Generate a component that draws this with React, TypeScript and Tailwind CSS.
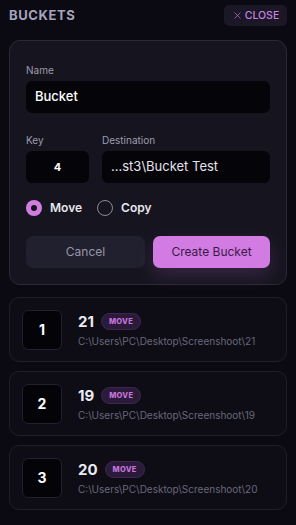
import { X } from "lucide-react";

type Bucket = {
  key: number;
  name: string;
  path: string;
};

const buckets: Bucket[] = [
  { key: 1, name: "21", path: "C:\\Users\\PC\\Desktop\\Screenshoot\\21" },
  { key: 2, name: "19", path: "C:\\Users\\PC\\Desktop\\Screenshoot\\19" },
  { key: 3, name: "20", path: "C:\\Users\\PC\\Desktop\\Screenshoot\\20" },
];

function BucketRow({ bucket }: { bucket: Bucket }) {
  return (
    <div className="flex h-[65px] items-center rounded-[10px] border border-[#1f1e2b] bg-[#0e0d16] pl-[12px]">
      <div className="flex h-[40px] w-[40px] items-center justify-center rounded-[6px] border border-[#221f2e] bg-[#040308] text-[14px] font-bold text-white">
        {bucket.key}
      </div>
      <div className="ml-[16px] flex flex-col">
        <div className="flex items-center gap-[7px]">
          <span className="text-[15px] font-bold leading-[18px] text-[#ecebf2]">
            {bucket.name}
          </span>
          <span className="rounded-full border border-[#3f2652] bg-[#2b1b3a] px-[7px] py-[3px] text-[7.5px] font-extrabold leading-[9px] tracking-[0.3px] text-[#c673dd]">
            MOVE
          </span>
        </div>
        <span className="mt-[4px] text-[10px] leading-[12px] text-[#696779]">
          {bucket.path}
        </span>
      </div>
    </div>
  );
}

export default function App() {
  return (
    <div className="min-h-[525px] w-[296px] bg-[#0b0a12] px-[9px] pt-[5px] font-['Inter',sans-serif]">
      <div className="flex h-[21px] items-center justify-between">
        <span className="text-[13px] font-bold tracking-[0.6px] text-[#a6a3bd]">
          BUCKETS
        </span>
        <button
          type="button"
          className="flex h-[21px] w-[63px] items-center justify-center gap-[2px] rounded-[5px] bg-[#1b1727] text-[10.5px] font-medium text-[#c683de]"
        >
          <X size={11} strokeWidth={1.4} />
          CLOSE
        </button>
      </div>

      <div className="mt-[14px] rounded-[11px] border border-[#2a2939] bg-[#16151f] px-[16px] pb-[16px] pt-[23px]">
        <label className="block text-[10px] leading-[12px] text-[#9d9bab]">Name</label>
        <div className="mt-[5px] flex h-[32px] items-center rounded-[6px] bg-[#050409] px-[9px] text-[13px] font-medium text-white">
          Bucket
        </div>

        <div className="mt-[21px] flex gap-[13px]">
          <div className="w-[63px]">
            <label className="block text-[10px] leading-[12px] text-[#9d9bab]">Key</label>
            <div className="mt-[5px] flex h-[32px] items-center justify-center rounded-[6px] bg-[#050409] text-[11px] font-bold text-white">
              4
            </div>
          </div>
          <div className="flex-1">
            <label className="block text-[10px] leading-[12px] text-[#9d9bab]">Destination</label>
            <div className="mt-[5px] flex h-[32px] items-center rounded-[6px] bg-[#050409] px-[9px] text-[13px] text-[#e4e3ea]">
              ...st3\Bucket Test
            </div>
          </div>
        </div>

        <div className="mt-[17px] flex h-[16px] items-center">
          <span className="flex h-[16px] w-[16px] items-center justify-center rounded-full bg-[#d27ce2]">
            <span className="h-[6px] w-[6px] rounded-full bg-[#16151f]" />
          </span>
          <span className="ml-[8px] text-[12px] font-semibold text-[#e8e7ee]">Move</span>
          <span className="ml-[15px] h-[16px] w-[16px] rounded-full border border-[#8b899a]" />
          <span className="ml-[8px] text-[12px] font-semibold text-[#e8e7ee]">Copy</span>
        </div>

        <div className="mt-[20px] flex gap-[8px]">
          <button
            type="button"
            className="h-[32px] w-[119px] rounded-[7px] bg-[#20202e] text-[12px] text-[#9896aa]"
          >
            Cancel
          </button>
          <button
            type="button"
            className="h-[32px] flex-1 rounded-[7px] bg-[#d27be3] text-[12px] text-[#3b1a47] shadow-[0_8px_18px_rgba(200,110,220,0.18)]"
          >
            Create Bucket
          </button>
        </div>
      </div>

      <div className="mt-[12px] flex flex-col gap-[9px] pb-[14px]">
        {buckets.map((b) => (
          <BucketRow key={b.key} bucket={b} />
        ))}
      </div>
    </div>
  );
}
